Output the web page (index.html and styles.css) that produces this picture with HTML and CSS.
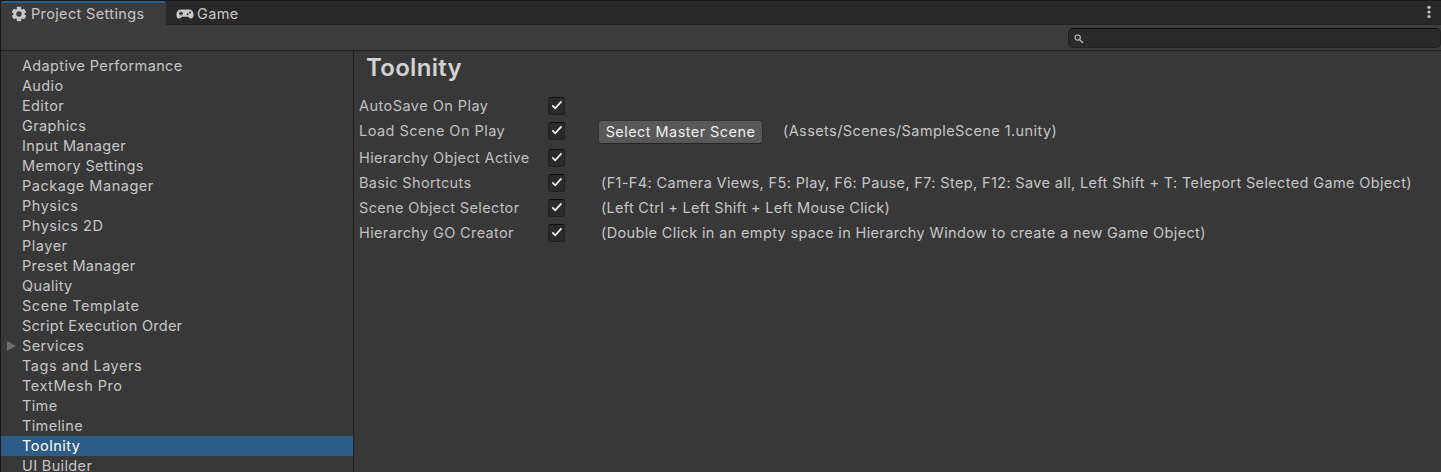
FILE: index.html
```html
<!DOCTYPE html>
<html lang="en">
<head>
<meta charset="utf-8">
<title>Project Settings</title>
<link rel="stylesheet" href="styles.css">
</head>
<body>
<div class="window">
  <header class="tabs">
    <div class="tab tab-active">
      <svg class="gear" viewBox="0 0 16 16" width="16" height="16"><g fill="#c8c8c8"><rect x="5.8" y="0.8" width="4.4" height="14.4" rx=".8"/><rect x="5.8" y="0.8" width="4.4" height="14.4" rx=".8" transform="rotate(60 8 8)"/><rect x="5.8" y="0.8" width="4.4" height="14.4" rx=".8" transform="rotate(120 8 8)"/><circle cx="8" cy="8" r="5.4"/></g><circle cx="8" cy="8" r="2.7" fill="#3c3c3c"/></svg>
      <span>Project Settings</span>
    </div>
    <div class="tab tab-game">
      <svg class="pad" viewBox="0 0 18 10" width="18" height="10"><path d="M5 .5h8c2.8 0 4.6 2 4.6 5 0 2.500-1 4-2.500 4-1.700 0-2.400-1.800-3.700-1.800H6.600C5.300 7.700 4.600 9.500 2.900 9.500 1.400 9.500.4 8 .4 5.500c0-3 1.800-5 4.600-5z" fill="#c8c8c8"/><path d="M3 4.500h4M5 2.500v4" stroke="#282828" stroke-width="1.300"/><circle cx="11.600" cy="5.300" r="1" fill="#282828"/><circle cx="14" cy="3.500" r="1" fill="#282828"/></svg>
      <span>Game</span>
    </div>
    <svg class="kebab" viewBox="0 0 4 14" width="4" height="14"><g fill="#c8c8c8"><circle cx="2" cy="2.300" r="1.600"/><circle cx="2" cy="7" r="1.600"/><circle cx="2" cy="11.500" r="1.600"/></g></svg>
  </header>
  <div class="toolbar">
    <div class="search">
      <svg viewBox="0 0 10 10" width="10" height="10"><circle cx="3.700" cy="3.600" r="2.600" fill="none" stroke="#c4c4c4" stroke-width="1.100"/><path d="M5.600 5.600L9 9" stroke="#c4c4c4" stroke-width="1.300"/></svg>
    </div>
  </div>
  <div class="body">
    <nav class="sidebar">
      <div class="item">Adaptive Performance</div>
      <div class="item">Audio</div>
      <div class="item">Editor</div>
      <div class="item">Graphics</div>
      <div class="item">Input Manager</div>
      <div class="item">Memory Settings</div>
      <div class="item item-loose">Package Manager</div>
      <div class="item item-loose">Physics</div>
      <div class="item item-loose">Physics 2D</div>
      <div class="item item-loose">Player</div>
      <div class="item">Preset Manager</div>
      <div class="item">Quality</div>
      <div class="item item-loose">Scene Template</div>
      <div class="item item-tight">Script Execution Order</div>
      <div class="item item-parent"><svg viewBox="0 0 9 10" width="9" height="10"><path d="M0 0L9 5L0 10z" fill="#6c6c6c"/></svg>Services</div>
      <div class="item item-loose">Tags and Layers</div>
      <div class="item item-loose">TextMesh Pro</div>
      <div class="item">Time</div>
      <div class="item">Timeline</div>
      <div class="item item-selected item-loose">Toolnity</div>
      <div class="item">UI Builder</div>
    </nav>
    <main class="panel">
      <h1 class="title">Toolnity</h1>
      <div class="row"><span class="label label-loose">AutoSave On Play</span><span class="check"><svg viewBox="0 0 12 10" width="12" height="10"><path d="M1.300 5.400L4.200 8.300L10.500 1.300" fill="none" stroke="#f0f0f0" stroke-width="1.800"/></svg></span></div>
      <div class="row row-tall"><span class="label label-loose">Load Scene On Play</span><span class="check"><svg viewBox="0 0 12 10" width="12" height="10"><path d="M1.300 5.400L4.200 8.300L10.500 1.300" fill="none" stroke="#f0f0f0" stroke-width="1.800"/></svg></span><button class="button" type="button">Select Master Scene</button><span class="path">(Assets/Scenes/SampleScene 1.unity)</span></div>
      <div class="row"><span class="label">Hierarchy Object Active</span><span class="check"><svg viewBox="0 0 12 10" width="12" height="10"><path d="M1.300 5.400L4.200 8.300L10.500 1.300" fill="none" stroke="#f0f0f0" stroke-width="1.800"/></svg></span></div>
      <div class="row"><span class="label">Basic Shortcuts</span><span class="check"><svg viewBox="0 0 12 10" width="12" height="10"><path d="M1.300 5.400L4.200 8.300L10.500 1.300" fill="none" stroke="#f0f0f0" stroke-width="1.800"/></svg></span><span class="hint">(F1-F4: Camera Views, F5: Play, F6: Pause, F7: Step, F12: Save all, Left Shift + T: Teleport Selected Game Object)</span></div>
      <div class="row"><span class="label">Scene Object Selector</span><span class="check"><svg viewBox="0 0 12 10" width="12" height="10"><path d="M1.300 5.400L4.200 8.300L10.500 1.300" fill="none" stroke="#f0f0f0" stroke-width="1.800"/></svg></span><span class="hint hint-tight">(Left Ctrl + Left Shift + Left Mouse Click)</span></div>
      <div class="row"><span class="label">Hierarchy GO Creator</span><span class="check"><svg viewBox="0 0 12 10" width="12" height="10"><path d="M1.300 5.400L4.200 8.300L10.500 1.300" fill="none" stroke="#f0f0f0" stroke-width="1.800"/></svg></span><span class="hint">(Double Click in an empty space in Hierarchy Window to create a new Game Object)</span></div>
    </main>
  </div>
</div>
</body>
</html>
```
FILE: styles.css
```css
* { box-sizing: border-box; }
body {
  margin: 0;
  background: #383838;
  color: #c6c6c6;
  font: 14.5px/20px Inter, "Liberation Sans", sans-serif;
  letter-spacing: 0.36px;
  white-space: nowrap;
  overflow: hidden;
}
.window {
  display: flex;
  flex-direction: column;
  height: 472px;
  border-top: 1px solid #191919;
  border-left: 1px solid #191919;
}
.tabs {
  display: flex;
  height: 24px;
  background: #282828;
  box-shadow: inset 0 -1px #232323;
}
.tab { display: flex; align-items: center; }
.tab-active {
  width: 165px;
  padding-left: 10px;
  gap: 4px;
  background: #3c3c3c;
  border-top: 2px solid #2c5d87;
  border-radius: 3px 3px 0 0;
}
.tab-game { padding: 2px 0 0 10px; gap: 3px; }
.kebab { margin: 4px 10px 0 auto; }
.toolbar {
  display: flex;
  justify-content: flex-end;
  height: 26px;
  padding-top: 3px;
  background: #3c3c3c;
  border-bottom: 1px solid #232323;
}
.search {
  display: flex;
  align-items: center;
  width: 373px;
  height: 20px;
  padding: 1px 0 0 5px;
  background: #2a2a2a;
  border: 1px solid #212121;
  border-top-color: #0d0d0d;
  border-radius: 5px;
}
.body { display: flex; flex: 1; min-height: 0; }
.sidebar {
  width: 353px;
  padding-top: 5px;
  border-right: 1px solid #1f1f1f;
  overflow: hidden;
}
.item { height: 20px; padding-left: 21px; }
.item-tight { letter-spacing: 0.25px; }
.item-loose { letter-spacing: 0.52px; }
.item-parent { display: flex; align-items: center; gap: 6px; padding-left: 6px; }
.item-selected { background: #2c5d87; color: #fff; }
.panel { flex: 1; padding-left: 5px; min-width: 0; }
.title {
  margin: 0 0 9px;
  padding: 2px 0 0 7px;
  height: 33px;
  font-size: 24px;
  line-height: 29px;
  font-weight: 600;
  letter-spacing: 0.3px;
  color: #d2d2d2;
}
.row { display: flex; align-items: center; height: 25px; }
.row-tall { height: 27px; padding-bottom: 2px; }
.label { flex: none; width: 189px; color: #c0c0c0; }
.label-loose { letter-spacing: 0.46px; }
.check {
  flex: none;
  display: flex;
  align-items: center;
  justify-content: center;
  width: 17px;
  height: 18px;
  padding-bottom: 1px;
  background: #2a2a2a;
  border: 1px solid #212121;
  border-top-color: #0d0d0d;
  border-radius: 3px;
}
.button {
  flex: none;
  width: 165px;
  height: 24px;
  margin: 2px 20px 0 33px;
  padding: 0;
  background: #585858;
  border: 1px solid #303030;
  border-bottom-color: #242424;
  border-radius: 4px;
  color: #eee;
  font: inherit;
  letter-spacing: 0.44px;
}
.path { letter-spacing: 0.41px; }
.hint { margin-left: 36px; }
.hint-tight { letter-spacing: 0.28px; }
```
